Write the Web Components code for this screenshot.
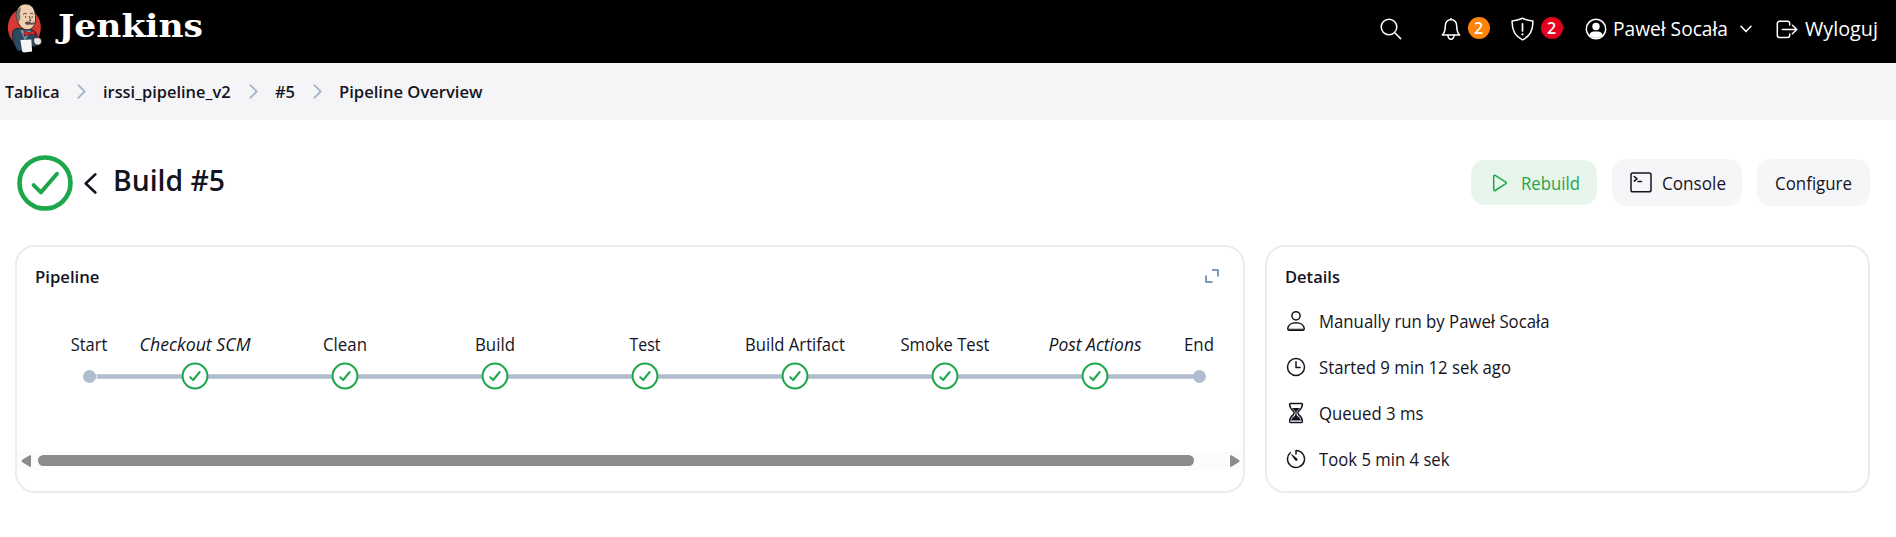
<!DOCTYPE html>
<html lang="pl">
<head>
<meta charset="utf-8">
<title>Build #5 - Jenkins</title>
<style>
html,body{margin:0;background:#fff}
body{font-family:"Open Sans","Noto Sans",sans-serif;font-size:17.800px;color:#14141f;height:537px;overflow:hidden}
</style>
</head>
<body>
<jk-page></jk-page>
<script>
const define=(name,html,init)=>{
  const t=document.createElement('template');t.innerHTML=html;
  customElements.define(name,class extends HTMLElement{
    connectedCallback(){
      if(this.shadowRoot)return;
      this.attachShadow({mode:'open'}).append(t.content.cloneNode(true));
      if(init)init.call(this,this.shadowRoot);
    }
  });
};

/* Single-line text fitted to an exact width given by the "w" attribute:
   condensed when it is too wide, tracked out when it is too narrow */
define('fit-text',`<style>:host{display:inline-block;flex:none;white-space:nowrap}span{display:inline-block;transform-origin:0 50%}</style><span><slot></slot></span>`,function(r){
  const s=r.querySelector('span'),w=+this.getAttribute('w');
  const natural=s.getBoundingClientRect().width;
  const k=this.hasAttribute('stretch')||natural>w?w/natural:1;
  this.style.width=w+'px';
  if(k!==1)s.style.transform='scaleX('+k.toFixed(4)+')';
  else s.style.letterSpacing=((w-natural)/this.textContent.trim().length).toFixed(3)+'px';
});

const S='fill="none" stroke="currentColor" stroke-linecap="round" stroke-linejoin="round"';
const icons={
  search:[22,22,`<g ${S} stroke-width="1.5"><circle cx="9" cy="9" r="7.8"/><path d="M14.8 14.8 20.6 20.6"/></g>`],
  bell:[20,24,`<g ${S} stroke-width="1.5"><path d="M10 1.6v1.2M10 2.6C6.6 3 4.3 5.4 4.3 9c0 4.4-.9 7-3 9h17.4c-2.100-2-3-4.600-3-9 0-3.600-2.300-6-5.700-6.400z"/><path d="M6.900 18.200c.2 2.700 1.400 4 3.100 4s2.900-1.300 3.100-4"/></g>`],
  shield:[23,24,`<g ${S} stroke-width="1.500"><path d="M11.500 1.300C8.500 2.700 5.200 3.600 1.100 3.900c-.3 8.700 2.400 15.400 10.400 19 8-3.600 10.700-10.300 10.400-19-4.100-.3-7.400-1.200-10.400-2.600z"/><path d="M11.500 6.800v7.200" stroke-width="1.700"/></g><circle cx="11.500" cy="17.300" r="1.100" fill="currentColor"/>`],
  user:[22,22,`<circle cx="11" cy="11" r="9.700" fill="none" stroke="currentColor" stroke-width="1.500"/><circle cx="11" cy="8.500" r="3.700" fill="currentColor"/><path d="M4.300 16.900c1-3 3.500-3.400 6.700-3.400s5.700.4 6.700 3.400c-1.700 2-4 3-6.700 3s-5-1-6.700-3z" fill="currentColor"/>`],
  down:[12,8,`<path ${S} stroke-width="1.500" d="M1 1.200 6 6.600 11 1.200"/>`],
  logout:[22,19,`<g ${S} stroke-width="1.500"><path d="M13.700 5V3.500a2.200 2.200 0 0 0-2.200-2.200H3.500A2.200 2.200 0 0 0 1.300 3.500v11.800a2.200 2.200 0 0 0 2.200 2.200h8a2.200 2.200 0 0 0 2.200-2.200V14"/><path d="M6.300 9.500H20.500M16.400 5.200l4.400 4.300-4.400 4.300"/></g>`],
  crumb:[9,15,`<path ${S} stroke-width="1.800" d="M1.300 1.200 7.700 7.500 1.300 13.800" style="stroke:#a3b5cd"/>`],
  status:[58,58,`<g ${S} stroke-width="4.600"><circle cx="29" cy="29" r="25.500"/><path stroke-width="4" d="M17.600 31.200l7.300 7.200L41 19.800"/></g>`],
  back:[13,21,`<path ${S} stroke-width="2.600" d="M11.300 1.400 1.700 10.500l9.600 9"/>`],
  play:[16,18,`<path ${S} stroke-width="1.500" d="M1.700 2.200C1.700 1.300 2.500 1 3.200 1.400L13.800 8.200c.6.400.6 1 0 1.400L3.200 16.500c-.7.400-1.500.1-1.500-.8z"/>`],
  console:[22,21,`<g ${S} stroke-width="1.500"><rect x="1" y="1" width="20" height="18.800" rx="1.800"/><path d="M4.200 4.500 7 6.800 4.200 9.100M8 9.500h3.500"/></g>`],
  expand:[14,14,`<g fill="none" stroke="#7f99b8" stroke-width="2" stroke-linejoin="round"><path d="M7 1h6v6.500M1 6.500V13h6.500"/></g>`],
  person:[20,22,`<g ${S} stroke-width="1.500"><circle cx="10" cy="5.800" r="4.100"/><path d="M1.700 18.800c.3-3.700 3.900-6 8.300-6s8 2.300 8.300 6c0 .9-.5 1.400-1.300 1.400H3c-.8 0-1.300-.5-1.300-1.400z"/></g><path d="M2 18.600h16v1.700H2z" fill="currentColor" opacity=".65"/>`],
  clock:[20,20,`<g ${S} stroke-width="1.500"><circle cx="10" cy="10" r="8.500"/><path d="M10 4.800V10.600h4"/></g>`],
  glass:[20,22,`<g ${S} stroke-width="1.500"><path d="M4.400 1.500h11.200c.8 0 .9.600.8 1-.3 3.400-1.500 4.800-3.700 6.600-1 .9-1 2.700 0 3.600 2.300 1.900 3.400 3.300 3.700 6.600 0 .7-.2 1.200-.9 1.200H4.500c-.7 0-.9-.5-.9-1.200.3-3.300 1.400-4.700 3.700-6.600 1-.9 1-2.700 0-3.600C5.100 7.300 3.900 5.900 3.600 2.500c0-.4 0-1 .8-1z"/></g><path d="M6 6h8c-.7 1.100-3.400 2.700-3.400 4v2.800c0 1.400 4 3 4.200 5.600H5.200c.2-2.600 4.200-4.200 4.200-5.600V10C9.400 8.700 6.700 7.100 6 6z" fill="currentColor"/>`],
  timer:[20,20,`<g ${S} stroke-width="1.500"><path d="M10 5V1.500a8.500 8.500 0 1 1-5.800 2.300"/></g><path d="M5.300 5.300c-.3.300-.2.500 0 .8l4 5.300a1.300 1.300 0 1 0 1.900-1.800L6.100 5.400c-.3-.3-.600-.3-.8-.1z" fill="currentColor"/>`],
  left:[10,12,`<path d="M10 1.200v9.600c0 1.200-1 1.200-1.800.7L1.300 7.300C.2 6.500.2 5.500 1.300 4.700L8.200.5C9 0 10 0 10 1.200z" fill="#8b8b8b"/>`],
  right:[10,12,`<path d="M0 1.200v9.600c0 1.200 1 1.200 1.800.7L8.700 7.300c1.100-.8 1.100-1.800 0-2.600L1.800.5C1 0 0 0 0 1.200z" fill="#8b8b8b"/>`],
  butler:[42,50,`<g transform="translate(.5 0) scale(.87 1)"><ellipse cx="20.500" cy="24.500" rx="19" ry="19" fill="#d33a33"/>
   <path d="M8 27c3-2 7-2 12-1 6-.5 12 1 14 4l3 9-4 5-8-2-1 5-11 1c-5-7-8-14-5-21z" fill="#2a4a61" stroke="#111a22" stroke-width=".8"/>
   <path d="M16 27l5 10 8-9z" fill="#6f9fc0"/>
   <path d="M13 19C10 13 11 6 16 2.500c6-3 13-1 15.500 3.700 2 4 2.500 9 1.300 13.500-1.300 4.500-4.800 7-8.300 7C19 27 16 24 13 19z" fill="#eed0b0" stroke="#1c1816" stroke-width=".9"/>
   <path d="M13 19c-2-4-2.500-9 .5-12.500L17 3.500c-1.500 3-.5 6-2 8 1.500 1 1.100 4-.3 7z" fill="#77706a"/>
   <path d="M19 11.500c1.500-1.500 3.500-1.400 4.500-.3M27 11c1.500-1.200 3-1 4 .2M26 13l2 4.500h-2" fill="none" stroke="#4a3b35" stroke-width="1"/>
   <circle cx="22" cy="14" r=".8" fill="#222"/><circle cx="29.500" cy="14" r=".8" fill="#222"/>
   <path d="M21 20c2-2 5.500-1.800 8 0l3-1c-.5 3-3 3.500-5 2.200-2 1-4.500 1-6-1.200z" fill="#5d4b45"/>
   <path d="M20 27.500l6 2.300 6-2.500 1 5-6-1-6.500 2.200z" fill="#d8262b" stroke="#4c1012" stroke-width=".6"/>
   <path d="M31 36c3-2 8-2 9 1s-1 4.500-3 5c-3 .5-6-1-6-6z" fill="#e8e4e0" stroke="#222" stroke-width=".8"/>
   <path d="M16 37l12.500-.5 1 12-9.500 1-2-1z" fill="#f6f6f6"/></g>`]
};
define('jk-icon',`<style>:host{display:block;flex:none}svg{display:block}</style>`,function(r){
  const [w,h,b]=icons[this.getAttribute('name')];
  r.innerHTML+=`<svg width="${w}" height="${h}" viewBox="0 0 ${w} ${h}">${b}</svg>`;
});

define('jk-badge',`<style>:host{display:flex;flex:none;width:22px;height:22px;border-radius:50%;align-items:center;justify-content:center;color:#fff;font-size:16px;font-weight:600;line-height:22px}</style><slot></slot>`);

define('jk-header',`<style>
:host{display:flex;height:63px;background:#000;color:#fff;align-items:flex-start}
:host>*{flex:none}
.brand{font:bold 31.500px/40px "DejaVu Serif",serif;margin:5.500px 0 0 10px}
.t{font-size:20px;line-height:28px;margin-top:15px}
</style>
<jk-icon name="butler" style="margin:3px 0 0 6px"></jk-icon>
<fit-text class="brand" w="145" stretch>Jenkins</fit-text>
<jk-icon name="search" style="margin:18px 0 0 1176.500px"></jk-icon>
<jk-icon name="bell" style="margin:17px 0 0 39px"></jk-icon>
<jk-badge style="background:#ff820a;margin:17px 0 0 7px">2</jk-badge>
<jk-icon name="shield" style="margin:17px 0 0 21px"></jk-icon>
<jk-badge style="background:#e6001f;margin:17px 0 0 7px">2</jk-badge>
<jk-icon name="user" style="margin:18px 0 0 22px"></jk-icon>
<fit-text class="t" w="115" style="margin-left:6px">Paweł Socała</fit-text>
<jk-icon name="down" style="margin:24.500px 0 0 12px"></jk-icon>
<jk-icon name="logout" style="margin:19.500px 0 0 24px"></jk-icon>
<fit-text class="t" w="73" style="margin-left:7px">Wyloguj</fit-text>`);

define('jk-crumbs',`<style>
:host{display:flex;height:57px;background:#f5f5f8;align-items:flex-start;font-size:17px;font-weight:600;line-height:24px;padding-left:5px}
fit-text{margin-top:17px}jk-icon{margin-top:21px}
</style>
<fit-text w="54.500">Tablica</fit-text><jk-icon name="crumb" style="margin-left:17px"></jk-icon>
<fit-text w="127.500" style="margin-left:17.500px">irssi_pipeline_v2</fit-text><jk-icon name="crumb" style="margin-left:18px"></jk-icon>
<fit-text w="20" style="margin-left:17.500px">#5</fit-text><jk-icon name="crumb" style="margin-left:17.500px"></jk-icon>
<fit-text w="143.500" style="margin-left:17px">Pipeline Overview</fit-text>`);

define('jk-button',`<style>
:host{display:flex;flex:none;box-sizing:border-box;height:47px;border-radius:14px;background:#f6f6f9;align-items:center;line-height:24px}
:host([primary]){background:#e8f5ec;color:#1ea64b;height:45px}
</style><slot></slot>`);

define('jk-title',`<style>
:host{display:flex;height:125px;align-items:flex-start}
:host>*{flex:none}
h1{margin:37px 0 0;font-size:28.500px;line-height:46px;font-weight:600}
.sp{flex:1}
nav{display:flex;gap:15px;align-items:center;margin:39px 26px 0 0}
</style>
<jk-icon name="status" style="color:#1ea64b;margin:34px 0 0 16px"></jk-icon>
<jk-icon name="back" style="margin:52.500px 0 0 10px"></jk-icon>
<h1 style="margin-left:15.500px"><fit-text w="112">Build #5</fit-text></h1>
<div class="sp"></div>
<nav>
<jk-button primary style="width:126px"><jk-icon name="play" style="margin:0 13px 0 21px"></jk-icon><fit-text w="59" style="padding-top:1px">Rebuild</fit-text></jk-button>
<jk-button style="width:130px"><jk-icon name="console" style="margin:0 9.500px 0 18px"></jk-icon><fit-text w="64">Console</fit-text></jk-button>
<jk-button style="width:113px"><fit-text w="77" style="margin-left:18px">Configure</fit-text></jk-button>
</nav>`);

define('jk-card',`<style>
:host{display:flex;flex-direction:column;box-sizing:border-box;height:248px;border:2px solid #ebebf3;border-radius:20px;background:#fff}
header{display:flex;justify-content:space-between;align-items:flex-start;font-weight:600;font-size:17px;line-height:24px;padding:18px 24px 0 17.500px;height:40px;box-sizing:border-box}
</style><header><slot name="title"></slot><slot name="action"></slot></header><slot></slot>`);

/* Pipeline graph: nodes lie on a free canvas, centred on their x coordinate */
define('jk-graph',`<style>
:host{display:block;position:relative;height:164px}
svg{position:absolute;left:0;top:0}
fit-text{position:absolute;top:45px;transform:translateX(-50%);line-height:24px}
</style>`,function(r){
  const st=[['Start',72.500,36.500],['Checkout SCM',178,111,1],['Clean',328,44],['Build',478,40],['Test',628,31],['Build Artifact',778,100],['Smoke Test',928,89],['Post Actions',1078,93,1],['End',1182.500,30]];
  const y=89;
  let g=`<path d="M72.500 ${y+.500}H1182.500" stroke="#b0bdcf" stroke-width="4.600"/><path d="M79.700 ${y-3}v7" stroke="#fff" stroke-width=".7"/>`;
  let t='';
  for(const [n,x,w,it] of st){
    g+=(n==='Start'||n==='End')?`<circle cx="${x}" cy="${y+.500}" r="6.500" fill="#b0bdcf"/>`
      :`<g transform="translate(${x} ${y})" fill="none" stroke="#1ea64b" stroke-width="2"><circle r="12.400" fill="#fff"/><path stroke-linecap="round" stroke-linejoin="round" d="M-4.700 1.200-1.800 4 4.700-4"/></g>`;
    t+=`<fit-text w="${w}" style="left:${x-.500}px;${it?'font-style:italic':''}">${n}</fit-text>`;
  }
  r.innerHTML+=`<svg width="1226" height="164">${g}</svg>${t}`;
});

define('jk-scroll',`<style>
:host{display:flex;height:19px;background:#fcfcfc;align-items:center;padding:0 4px}
div{flex:none;width:1156px;height:11px;border-radius:5.500px;background:#8b8b8b;margin:0 36px 0 7px}
</style><jk-icon name="left"></jk-icon><div></div><jk-icon name="right"></jk-icon>`);

define('jk-detail',`<style>
:host{display:flex;height:46px;align-items:center;padding-left:19px;line-height:24px}
.i{flex:none;width:20px;display:flex;justify-content:center;margin:0 13px 0 0}
</style><div class="i"><slot name="icon"></slot></div><slot></slot>`);

define('jk-page',`<style>
:host{display:block}
main{display:flex;gap:20px;padding:0 26px 0 15px}
.p{width:1230px;flex:none}.d{flex:1}
.rows{margin-top:11px}
</style>
<jk-header></jk-header><jk-crumbs></jk-crumbs><jk-title></jk-title>
<main>
<jk-card class="p"><fit-text slot="title" w="64.500">Pipeline</fit-text><jk-icon slot="action" name="expand" style="margin-top:4px"></jk-icon>
<jk-graph></jk-graph><jk-scroll></jk-scroll></jk-card>
<jk-card class="d"><fit-text slot="title" w="55">Details</fit-text>
<div class="rows">
<jk-detail><jk-icon slot="icon" name="person"></jk-icon><fit-text w="230.500">Manually run by Paweł Socała</fit-text></jk-detail>
<jk-detail><jk-icon slot="icon" name="clock"></jk-icon><fit-text w="192">Started 9 min 12 sek ago</fit-text></jk-detail>
<jk-detail><jk-icon slot="icon" name="glass"></jk-icon><fit-text w="104.500">Queued 3 ms</fit-text></jk-detail>
<jk-detail><jk-icon slot="icon" name="timer"></jk-icon><fit-text w="130.500">Took 5 min 4 sek</fit-text></jk-detail>
</div></jk-card>
</main>`);
</script>
</body>
</html>
